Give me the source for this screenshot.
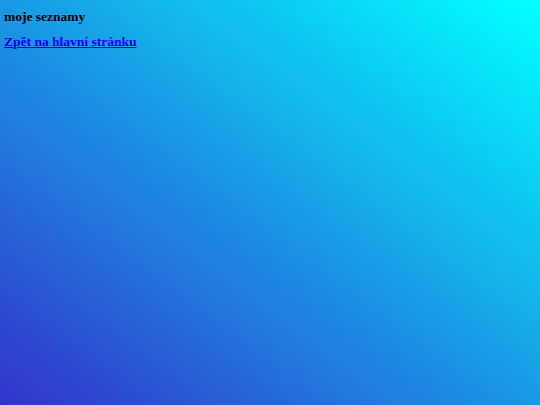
export default function App() {
  return (
    <div className="min-h-[405px] w-full bg-[linear-gradient(to_top_right,#3333cc,#00ffff)] px-[4px] pt-[9px] pb-[8px] font-['Liberation_Serif',serif] text-[13.5px] font-bold text-black">
      <p className="leading-[16px]">moje seznamy</p>
      <a href="#" className="mt-[9px] block leading-[16px] text-[#0000ee] underline">
        Zpět na hlavní stránku
      </a>
    </div>
  );
}
